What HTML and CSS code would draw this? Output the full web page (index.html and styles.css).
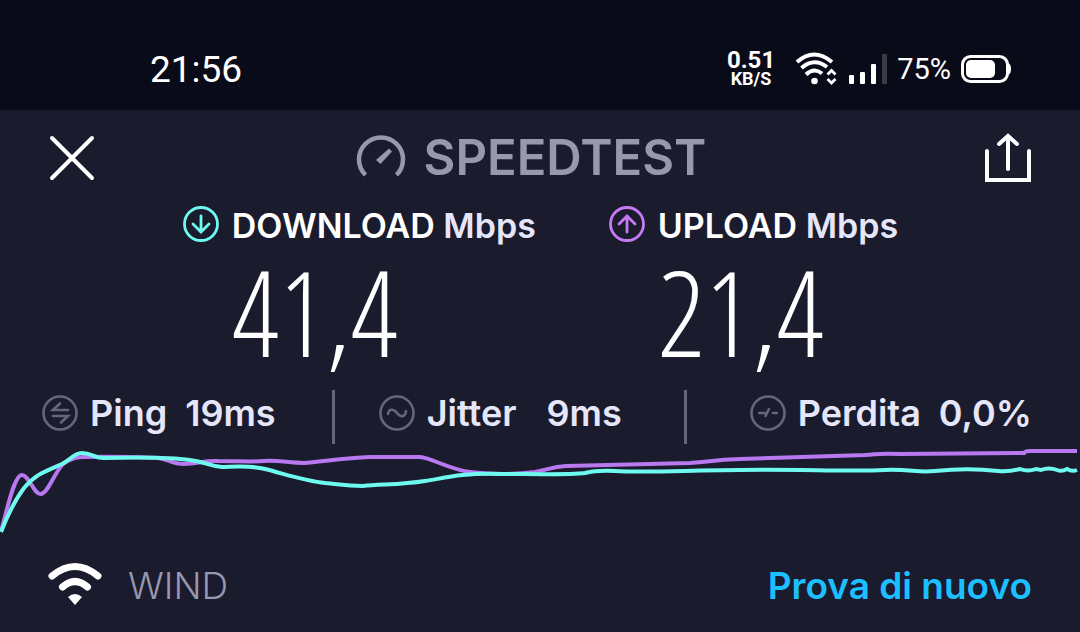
FILE: index.html
```html
<!DOCTYPE html>
<html lang="it">
<head>
    <meta charset="UTF-8">
    <meta name="viewport" content="width=device-width, initial-scale=1.0">
    <title>Speedtest</title>
    <link rel="stylesheet" href="styles.css">
</head>
<body>
    <div class="status-bar">
        <time class="clock">21:56</time>
        <div class="status-icons">
            <div class="net-speed">
                <span class="net-value">0.51</span>
                <span class="net-unit">KB/S</span>
            </div>
            <svg class="status-wifi" width="42" height="34" viewBox="0 0 42 34" fill="none" stroke="#fff" stroke-width="4">
                <path d="M2 10Q19 -5 37 10"/>
                <path d="M6.500 16Q19 5 32 15"/>
                <path d="M11 22.500Q19 15 27 21.500"/>
                <circle cx="19.500" cy="29" r="3.300" fill="#fff" stroke="none"/>
                <path d="M32.500 22.500l4-4 4 4M32.500 27l4 4 4-4" stroke-width="2.800"/>
            </svg>
            <svg class="status-signal" width="40" height="32" viewBox="0 0 40 32" fill="#fff">
                <rect x="2" y="22" width="5" height="9" rx="1"/>
                <rect x="13" y="19" width="5" height="12" rx="1"/>
                <rect x="24" y="11" width="5" height="20" rx="1"/>
                <rect x="35" y="1" width="5" height="30" rx="1" fill="#3c3c47"/>
            </svg>
            <span class="battery-level">75%</span>
            <svg class="status-battery" width="51" height="30" viewBox="0 0 51 30">
                <rect x="1.500" y="2.500" width="45" height="25" rx="8" fill="none" stroke="#fff" stroke-width="3"/>
                <rect x="5" y="6" width="29" height="18" rx="5" fill="#fff"/>
                <path d="M47 9q3 1 3 6t-3 6z" fill="#fff"/>
            </svg>
        </div>
    </div>

    <header class="header">
        <button class="icon-button" type="button" aria-label="Chiudi">
            <svg width="48" height="48" viewBox="0 0 48 48" fill="none" stroke="#fff" stroke-width="4" stroke-linecap="round">
                <path d="M4 4L44 44M44 4L4 44"/>
            </svg>
        </button>
        <h1 class="logo">
            <svg width="50" height="48" viewBox="0 0 50 48">
                <path d="M9.500 41A22 22 0 1 1 40.500 41" fill="none" stroke="#9797ad" stroke-width="4.500"/>
                <path d="M33 14.500L36 17.500L24.500 30L20 26z" fill="#9797ad"/>
            </svg>
            SPEEDTEST
        </h1>
        <button class="icon-button" type="button" aria-label="Condividi">
            <svg width="48" height="52" viewBox="0 0 48 52" fill="none" stroke="#fff" stroke-width="4" stroke-linecap="round">
                <path d="M3 19V48H45V19M24 37V4M15 12L24 4L33 12"/>
            </svg>
        </button>
    </header>

    <main class="results">
        <div class="speeds">
            <section class="speed download">
                <svg width="38" height="38" viewBox="0 0 38 38" fill="none" stroke="currentColor" stroke-width="2.800" stroke-linecap="round">
                    <circle cx="19" cy="17" r="16.500"/>
                    <path d="M19 9V24M11 17L19 25L27 17"/>
                </svg>
                <h2 class="speed-label">DOWNLOAD <span class="unit">Mbps</span></h2>
                <p class="speed-value">41,4</p>
            </section>
            <section class="speed upload">
                <svg width="38" height="38" viewBox="0 0 38 38" fill="none" stroke="currentColor" stroke-width="2.800" stroke-linecap="round">
                    <circle cx="19" cy="17" r="16.500"/>
                    <path d="M19 25V10M11 17L19 9L27 17"/>
                </svg>
                <h2 class="speed-label">UPLOAD <span class="unit">Mbps</span></h2>
                <p class="speed-value">21,4</p>
            </section>
        </div>

        <dl class="stats">
            <div class="stat">
                <svg width="36" height="36" viewBox="0 0 36 36" fill="none" stroke="#66667a" stroke-width="2.600" stroke-linecap="round">
                    <circle cx="18" cy="18" r="16.500"/>
                    <path d="M26 15H11L18 8.500M11 21H26L19 27.500"/>
                </svg>
                <dt>Ping</dt>
                <dd>19ms</dd>
            </div>
            <div class="divider"></div>
            <div class="stat stat-jitter">
                <svg width="36" height="36" viewBox="0 0 36 36" fill="none" stroke="#66667a" stroke-width="2.600" stroke-linecap="round">
                    <circle cx="18" cy="18" r="16.500"/>
                    <path d="M9 19C10 13 15 14 18 18S26 23 27 16"/>
                </svg>
                <dt>Jitter</dt>
                <dd>9ms</dd>
            </div>
            <div class="divider"></div>
            <div class="stat stat-loss">
                <svg width="36" height="36" viewBox="0 0 36 36" fill="none" stroke="#66667a" stroke-width="2.600" stroke-linecap="round">
                    <circle cx="18" cy="18" r="16.500"/>
                    <path d="M9 18H15M15.500 21L19 14M23 18H27"/>
                </svg>
                <dt>Perdita</dt>
                <dd>0,0%</dd>
            </div>
        </dl>

        <svg class="chart" viewBox="0 0 1080 92" preserveAspectRatio="none" fill="none" stroke-width="4">
            <path stroke="#b878f0" d="M1 87C8 63 14 31 22 31C29 31 34 51 41 50C48 49 53 31 63 20C70 15 76 13 82 13C110 12 136 13 158 14C168 15 172 20 184 20C198 20 205 16 218 17C240 17 252 18 264 17C280 16 288 19 304 19C320 18 344 14 370 13H420C432 14 448 25 470 28C495 31 520 30 535 28C550 25 552 23 566 22L690 19C710 18 712 16 740 15L865 11C880 10 880 9 900 10L1024 9Q1025 7 1030 7L1077 7"/>
            <path stroke="#6ffaf0" d="M1 88C8 70 15 56 24 44C36 30 44 28 62 20C70 16 74 9 82 9C92 9 95 15 105 14C140 13 170 13 190 16C206 18 209 22 222 23C232 23 250 21 265 25C285 30 305 37 325 39C338 40 345 42 363 42C380 40 400 41 425 37C445 34 460 29 500 30C530 30 570 31 585 29Q597 26 615 27C650 29 690 26 740 26C800 25 850 28 885 26C910 25 918 29 935 27C955 25 980 25 998 27Q1009 28 1020 25Q1028 28 1036 25L1041 26Q1049 23 1057 26Q1062 28 1067 25Q1072 28 1077 26"/>
        </svg>
    </main>

    <footer class="footer">
        <div class="network">
            <svg width="54" height="44" viewBox="0 0 54 44" fill="none" stroke="#fff" stroke-width="7" stroke-linecap="round">
                <path d="M4 12Q27 -7 50 12"/>
                <path d="M14.500 23Q27 12 39.500 23"/>
                <path d="M20 33Q27 27 34 33L27 41z" fill="#fff" stroke="none"/>
            </svg>
            <span>WIND</span>
        </div>
        <button class="retry-button" type="button">Prova di nuovo</button>
    </footer>
</body>
</html>
```
FILE: styles.css
```css
* {
    box-sizing: border-box;
}

body {
    font-family: Inter, "Liberation Sans", sans-serif;
    background-color: #1b1b2e;
    color: #fff;
    margin: 0;
    min-height: 100vh;
    display: flex;
    flex-direction: column;
}

h1, h2, p, dl, dd {
    margin: 0;
}

svg {
    display: block;
    flex-shrink: 0;
    overflow: visible;
}

button {
    padding: 0;
    border: none;
    background: none;
    font-family: inherit;
    cursor: pointer;
}

/* Status bar */
.status-bar {
    display: flex;
    justify-content: space-between;
    align-items: center;
    padding: 28px 68px 0 150px;
    height: 110px;
    background-color: #090b18;
    font-family: Roboto, sans-serif;
}

.clock {
    font-size: 37px;
}

.status-icons {
    display: flex;
    align-items: center;
    gap: 10px;
}

.net-speed {
    display: flex;
    flex-direction: column;
    align-items: center;
    margin-right: 10px;
    font-weight: 700;
}

.net-value {
    font-size: 24px;
    line-height: 20px;
}

.net-unit {
    font-size: 18px;
    line-height: 18px;
}

.battery-level {
    font-size: 29px;
}

/* Header */
.header {
    display: flex;
    justify-content: space-between;
    align-items: center;
    padding: 22px 48px 0;
}

.logo {
    display: flex;
    align-items: center;
    gap: 18px;
    margin-right: 18px;
    font-size: 49px;
    line-height: 52px;
    font-weight: 600;
    color: #9797ad;
}

/* Download and upload */
.speeds {
    display: flex;
    justify-content: center;
    gap: 72px;
    padding-top: 20px;
}

.speed {
    display: grid;
    grid-template-columns: auto auto;
    column-gap: 12px;
    align-items: center;
}

.download {
    color: #6ffaf0;
}

.upload {
    color: #c77af5;
}

.speed-label {
    color: #fff;
    font-size: 34px;
    line-height: 44px;
    font-weight: 600;
}

.unit {
    color: #e6e6fa;
}

.speed-value {
    grid-column: 2;
    color: #fff;
    font-family: "Open Sans Condensed Light", Roboto, sans-serif;
    font-size: 118px;
    line-height: 128px;
    font-weight: 100;
}

/* Ping, jitter, packet loss */
.stats {
    display: grid;
    grid-template-columns: 290fr auto 350fr auto 345fr;
    align-items: center;
    padding: 14px 48px 0 42px;
    color: #e6e6fa;
    font-size: 36px;
    line-height: 44px;
    font-weight: 600;
}

.stat {
    display: flex;
    align-items: center;
    padding-bottom: 8px;
}

.stat dt {
    margin: 0 18px 0 12px;
}

.stat-jitter {
    padding-left: 44px;
}

.stat-jitter dt {
    margin-right: 30px;
}

.stat-loss {
    justify-content: flex-end;
}

.divider {
    width: 3px;
    height: 54px;
    background-color: #66667a;
}

.chart {
    width: 100%;
    height: 92px;
}

/* Footer */
.footer {
    display: flex;
    justify-content: space-between;
    align-items: center;
    padding: 28px 48px 20px;
}

.network {
    display: flex;
    align-items: center;
    gap: 26px;
    color: #9797ad;
    font-size: 37px;
    line-height: 44px;
    font-weight: 300;
}

.retry-button {
    color: #1cbfff;
    font-size: 37px;
    line-height: 44px;
    font-weight: 600;
}
```
